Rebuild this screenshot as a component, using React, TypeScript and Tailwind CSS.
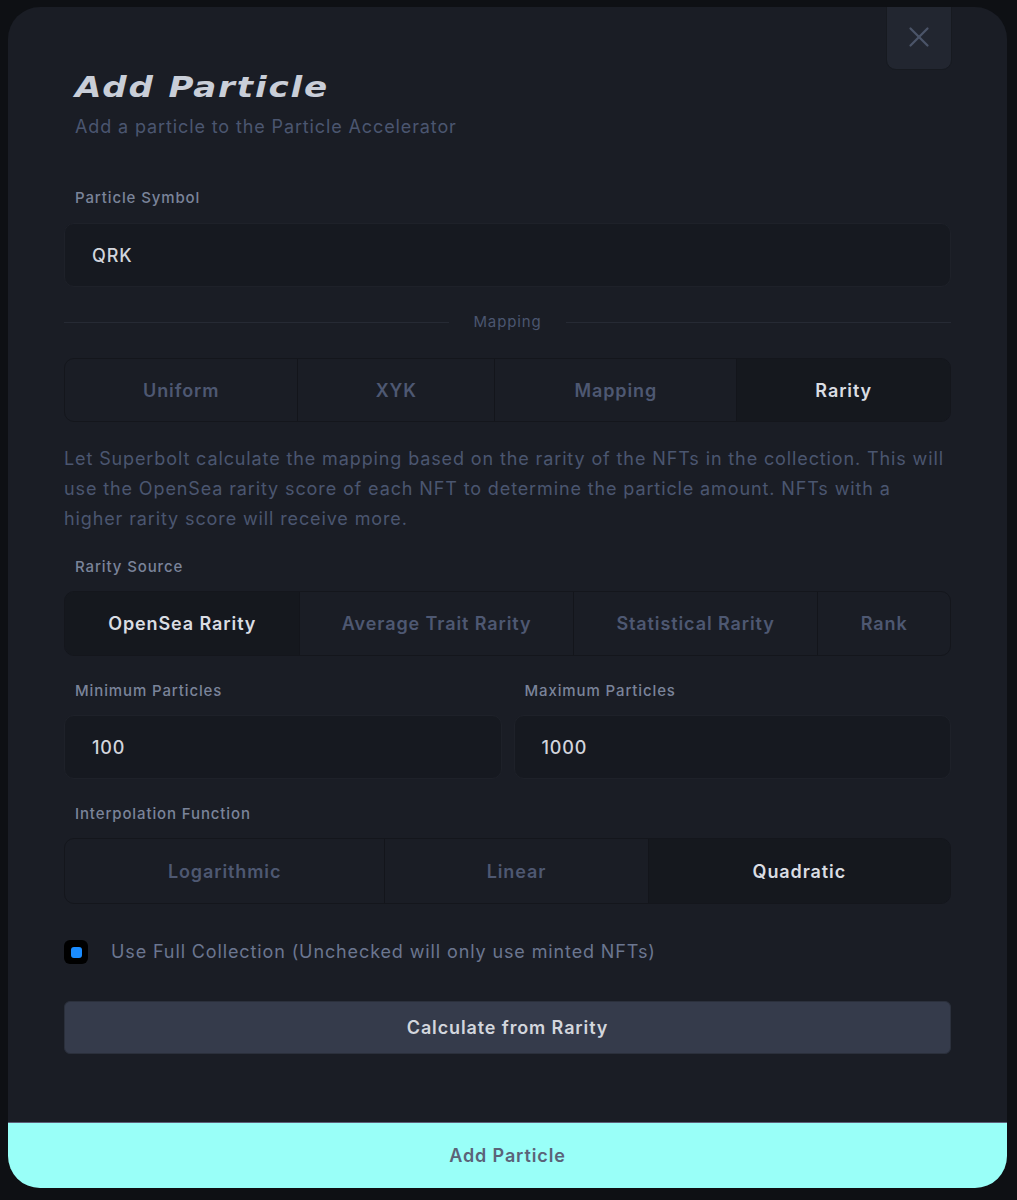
import { X } from 'lucide-react';

const body = "font-['Inter','Noto_Sans',sans-serif] tracking-[0.055em]";

interface SegmentedProps {
  options: string[];
  active: string;
  cols: string;
  height: string;
}

function Segmented({ options, active, cols, height }: SegmentedProps) {
  return (
    <div
      className={`grid ${cols} ${height} overflow-hidden rounded-[10px] border border-[#14161c] bg-[#1a1d25]`}
    >
      {options.map((opt, i) => {
        const isActive = opt === active;
        return (
          <button
            key={opt}
            className={`flex items-center justify-center text-[18px] font-semibold tracking-[0.05em] ${
              i > 0 ? 'border-l border-[#13151b]' : ''
            } ${isActive ? 'bg-[#15181e] text-[#dadde3]' : 'text-[#4e5872]'}`}
          >
            {opt}
          </button>
        );
      })}
    </div>
  );
}

function Label({ children, className = '' }: { children: React.ReactNode; className?: string }) {
  return (
    <div className={`pl-[11px] text-[15px] font-medium leading-[20px] text-[#7a849a] ${className}`}>
      {children}
    </div>
  );
}

function TextInput({ value }: { value: string }) {
  return (
    <div className="flex h-[64px] items-center rounded-[10px] border border-[#1e2129] bg-[#161920] px-[27px] text-[18px] font-medium text-[#d2d5dc]">
      {value}
    </div>
  );
}

export default function App() {
  return (
    <div className={`min-h-[1200px] bg-[#0e1014] pl-[8px] pr-[10px] pt-[7px] ${body}`}>
      <div className="relative flex h-[1181px] flex-col overflow-hidden rounded-[32px] bg-[#1a1d25]">
        {/* Close */}
        <button className="absolute right-[55px] top-[-3px] flex h-[66px] w-[66px] items-center justify-center rounded-b-[10px] border border-[#171a20] bg-[#222630] text-[#4b5468]">
          <X size={34} strokeWidth={1.6} />
        </button>

        <div className="flex flex-col px-[56px] pt-[63px]">
          <h2 className="origin-left scale-x-[1.22] pl-[9px] font-['DejaVu_Sans',sans-serif] text-[28px] font-bold italic leading-[36px] tracking-[1.5px] text-[#c9ced8]">
            Add Particle
          </h2>
          <p className="mt-[9px] pl-[11px] text-[18px] leading-[24px] text-[#4b5670]">
            Add a particle to the Particle Accelerator
          </p>

          <Label className="mt-[49px]">Particle Symbol</Label>
          <div className="mt-[15px]">
            <TextInput value="QRK" />
          </div>

          {/* Divider */}
          <div className="mt-[25px] flex h-[20px] items-center gap-[24px]">
            <div className="h-px flex-1 bg-[#262a34]" />
            <span className="text-[15px] text-[#4b5670]">Mapping</span>
            <div className="h-px flex-1 bg-[#262a34]" />
          </div>

          <div className="mt-[26px]">
            <Segmented
              options={['Uniform', 'XYK', 'Mapping', 'Rarity']}
              active="Rarity"
              cols="grid-cols-[233fr_197fr_243fr_214fr]"
              height="h-[64px]"
            />
          </div>

          <p className="mt-[22px] text-[18px] leading-[30px] text-[#4b5670]">
            Let Superbolt calculate the mapping based on the rarity of the NFTs in the collection. This will
            use the OpenSea rarity score of each NFT to determine the particle amount. NFTs with a higher
            rarity score will receive more.
          </p>

          <Label className="mt-[23px]">Rarity Source</Label>
          <div className="mt-[14px]">
            <Segmented
              options={['OpenSea Rarity', 'Average Trait Rarity', 'Statistical Rarity', 'Rank']}
              active="OpenSea Rarity"
              cols="grid-cols-[235fr_274fr_245fr_133fr]"
              height="h-[65px]"
            />
          </div>

          <div className="mt-[25px] grid grid-cols-2 gap-x-[12px]">
            <div className="flex flex-col gap-[14px]">
              <Label>Minimum Particles</Label>
              <TextInput value="100" />
            </div>
            <div className="flex flex-col gap-[14px]">
              <Label>Maximum Particles</Label>
              <TextInput value="1000" />
            </div>
          </div>

          <Label className="mt-[25px]">Interpolation Function</Label>
          <div className="mt-[14px]">
            <Segmented
              options={['Logarithmic', 'Linear', 'Quadratic']}
              active="Quadratic"
              cols="grid-cols-[320fr_264fr_303fr]"
              height="h-[66px]"
            />
          </div>

          {/* Checkbox */}
          <label className="mt-[36px] flex h-[24px] items-center gap-[23px]">
            <span className="flex h-[24px] w-[24px] items-center justify-center rounded-[6px] bg-black">
              <span className="h-[11px] w-[11px] rounded-[3px] bg-[#1a8cff]" />
            </span>
            <span className="text-[18px] leading-[24px] text-[#6b7690]">
              Use Full Collection (Unchecked will only use minted NFTs)
            </span>
          </label>

          <button className="mt-[37px] h-[53px] rounded-[6px] border border-[#2b303c] bg-[#353b4b] text-[18px] font-semibold text-[#d3d6dd]">
            Calculate from Rarity
          </button>
        </div>

        <button className="mt-auto h-[66px] border-t border-[#5d6078] bg-[#99fff8] text-[18px] font-semibold text-[#5b6378]">
          Add Particle
        </button>
      </div>
    </div>
  );
}
